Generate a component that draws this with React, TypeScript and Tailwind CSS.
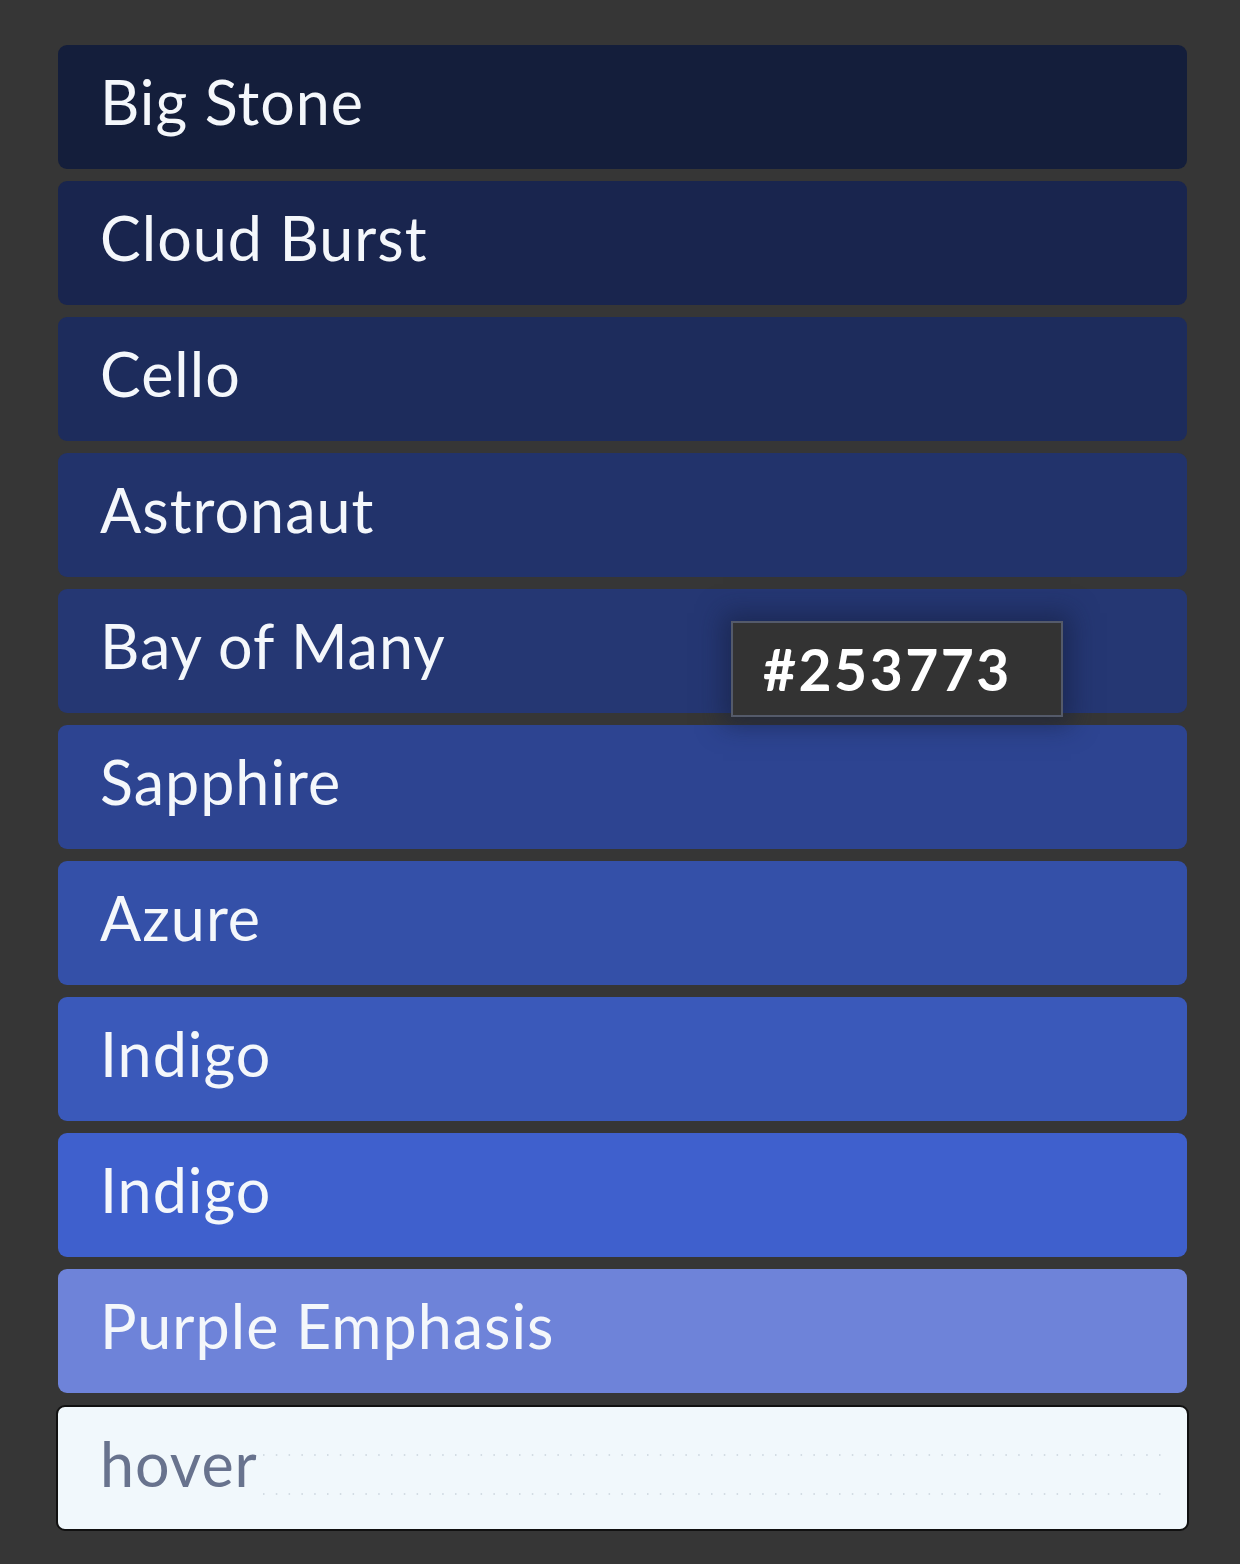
import React from "react";

const rows: { name: string; bg: string }[] = [
  { name: "Big Stone", bg: "bg-[#141e3b]" },
  { name: "Cloud Burst", bg: "bg-[#19254e]" },
  { name: "Cello", bg: "bg-[#1d2c5c]" },
  { name: "Astronaut", bg: "bg-[#22336b]" },
  { name: "Bay of Many", bg: "bg-[#253773]" },
  { name: "Sapphire", bg: "bg-[#2d4491]" },
  { name: "Azure", bg: "bg-[#3450a8]" },
  { name: "Indigo", bg: "bg-[#3a59ba]" },
  { name: "Indigo", bg: "bg-[#3f60cd]" },
  { name: "Purple Emphasis", bg: "bg-[#6e83d9]" },
];

export default function App() {
  return (
    <div
      className="w-[1240px] h-[1564px] bg-[#363636] px-[58px] pt-[45px]"
      style={{ fontFamily: "Lato, 'Open Sans', sans-serif" }}
    >
      <div className="flex flex-col gap-[12px] w-[1129px]">
        {rows.map((r, i) => (
          <div
            key={i}
            className={`relative h-[124px] rounded-[9px] ${r.bg} flex items-start pl-[42px] pt-[22px]`}
          >
            <span className="text-[61px] leading-[70px] text-[#f4f7fb] tracking-[1px]">
              {r.name}
            </span>
            {i === 4 && (
              <div className="absolute left-[673px] top-[32px] w-[332px] h-[96px] bg-[#333333] border-2 border-[#545a6a] shadow-[0_0_24px_8px_rgba(20,30,60,0.55)] z-10 flex items-center pl-[30px]">
                <span className="text-[57px] font-bold text-white leading-none tracking-[2.5px]">
                  #253773
                </span>
              </div>
            )}
          </div>
        ))}
        <div className="relative -mx-[2px] h-[126px] rounded-[9px] bg-[#f1f8fc] border-2 border-[#111111] flex items-start pl-[42px] pt-[22px]">
          <span className="text-[61px] leading-[70px] text-[#68738e] tracking-[1px]">
            hover
          </span>
          <svg className="absolute left-0 top-0" width="1129" height="122">
            <line x1="205" y1="48" x2="1110" y2="48" stroke="#c9d3dc" strokeWidth="1.5" strokeDasharray="1.5 11.3" />
            <line x1="205" y1="87" x2="1110" y2="87" stroke="#c9d3dc" strokeWidth="1.5" strokeDasharray="1.5 11.3" />
          </svg>
        </div>
      </div>
    </div>
  );
}
